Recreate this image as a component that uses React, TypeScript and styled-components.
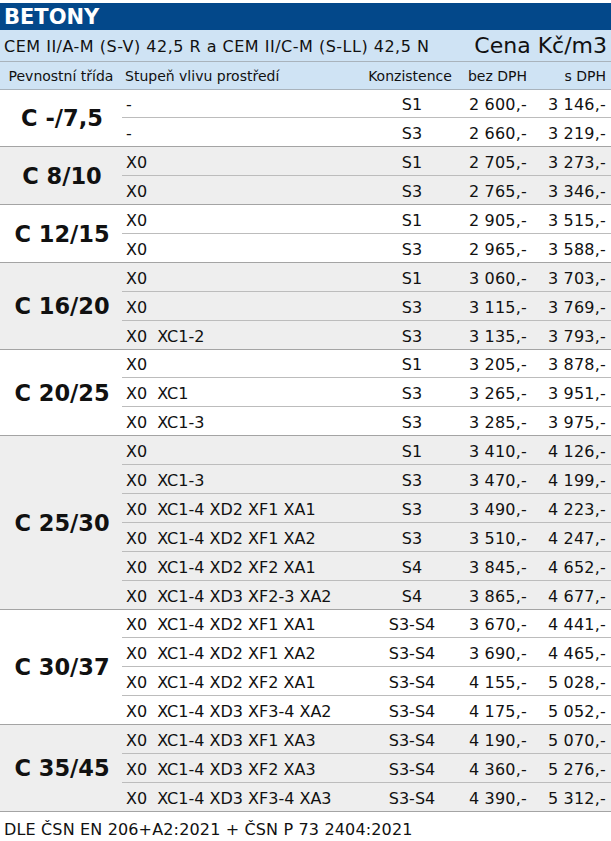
import React from "react";
import styled, { createGlobalStyle } from "styled-components";

const Global = createGlobalStyle`
  html, body { margin: 0; padding: 0; background: #ffffff; }
  body { font-family: "DejaVu Sans", Verdana, sans-serif; color: #111; }
`;

const Page = styled.div`
  width: 611px;
  padding-top: 3px;
`;

const TitleBar = styled.div`
  height: 27px;
  background: #03488a;
  color: #ffffff;
  font-weight: bold;
  font-size: 21px;
  line-height: 28px;
  padding-left: 4px;
`;

const Table = styled.table`
  width: 611px;
  border-collapse: collapse;
  table-layout: fixed;
  font-size: 16px;
`;

const CementRow = styled.tr`
  background: #cfe3f4;
  height: 31px;
  border-bottom: 1px solid #a9b3bc;
`;

const CementCell = styled.td`
  padding: 2px 0 0 4px;
  font-size: 16px;
  letter-spacing: 0.5px;
  white-space: nowrap;
`;

const PriceTitle = styled.td`
  font-size: 22px;
  text-align: right;
  padding: 0 4px 0 0;
  white-space: nowrap;
`;

const HeadRow = styled.tr`
  background: #cfe3f4;
  height: 28px;
  border-bottom: 1px solid #a9b3bc;
`;

const HeadCell = styled.th<{ $align?: string; $pr?: number }>`
  font-weight: normal;
  font-size: 14px;
  text-align: ${(p) => p.$align || "left"};
  padding: 1px ${(p) => p.$pr ?? 0}px 0 ${(p) => (p.$align === "left" ? 3 : 0)}px;
  white-space: nowrap;
`;

const BodyRow = styled.tr<{ $shade: boolean; $last: boolean }>`
  background: ${(p) => (p.$shade ? "#eeeeee" : "#ffffff")};
  height: 28.9px;
  border-bottom: 1px solid ${(p) => (p.$last ? "#a4a4a4" : "#bcbcbc")};
`;

const ClassCell = styled.td`
  font-weight: bold;
  font-size: 22.5px;
  text-align: center;
  vertical-align: middle;
  white-space: nowrap;
  padding: 1px 0 0 2px;
  border-bottom: 1px solid #a4a4a4;
`;

const TextCell = styled.td`
  padding: 3px 0 0 4px;
  white-space: pre;
`;

const ConsCell = styled.td`
  padding: 3px 0 0 4px;
  text-align: center;
  white-space: nowrap;
`;

const NumCell = styled.td<{ $pr: number }>`
  padding: 3px ${(p) => p.$pr}px 0 0;
  text-align: right;
  white-space: nowrap;
  letter-spacing: 0.2px;
`;

const Footer = styled.div`
  font-size: 16px;
  letter-spacing: 0.15px;
  padding: 8px 0 0 4px;
`;

type Row = [string, string, string, string];
type Group = { name: string; rows: Row[] };

const groups: Group[] = [
  { name: "C -/7,5", rows: [["-", "S1", "2 600,-", "3 146,-"], ["-", "S3", "2 660,-", "3 219,-"]] },
  { name: "C 8/10", rows: [["X0", "S1", "2 705,-", "3 273,-"], ["X0", "S3", "2 765,-", "3 346,-"]] },
  { name: "C 12/15", rows: [["X0", "S1", "2 905,-", "3 515,-"], ["X0", "S3", "2 965,-", "3 588,-"]] },
  {
    name: "C 16/20",
    rows: [
      ["X0", "S1", "3 060,-", "3 703,-"],
      ["X0", "S3", "3 115,-", "3 769,-"],
      ["X0  XC1-2", "S3", "3 135,-", "3 793,-"],
    ],
  },
  {
    name: "C 20/25",
    rows: [
      ["X0", "S1", "3 205,-", "3 878,-"],
      ["X0  XC1", "S3", "3 265,-", "3 951,-"],
      ["X0  XC1-3", "S3", "3 285,-", "3 975,-"],
    ],
  },
  {
    name: "C 25/30",
    rows: [
      ["X0", "S1", "3 410,-", "4 126,-"],
      ["X0  XC1-3", "S3", "3 470,-", "4 199,-"],
      ["X0  XC1-4 XD2 XF1 XA1", "S3", "3 490,-", "4 223,-"],
      ["X0  XC1-4 XD2 XF1 XA2", "S3", "3 510,-", "4 247,-"],
      ["X0  XC1-4 XD2 XF2 XA1", "S4", "3 845,-", "4 652,-"],
      ["X0  XC1-4 XD3 XF2-3 XA2", "S4", "3 865,-", "4 677,-"],
    ],
  },
  {
    name: "C 30/37",
    rows: [
      ["X0  XC1-4 XD2 XF1 XA1", "S3-S4", "3 670,-", "4 441,-"],
      ["X0  XC1-4 XD2 XF1 XA2", "S3-S4", "3 690,-", "4 465,-"],
      ["X0  XC1-4 XD2 XF2 XA1", "S3-S4", "4 155,-", "5 028,-"],
      ["X0  XC1-4 XD3 XF3-4 XA2", "S3-S4", "4 175,-", "5 052,-"],
    ],
  },
  {
    name: "C 35/45",
    rows: [
      ["X0  XC1-4 XD3 XF1 XA3", "S3-S4", "4 190,-", "5 070,-"],
      ["X0  XC1-4 XD3 XF2 XA3", "S3-S4", "4 360,-", "5 276,-"],
      ["X0  XC1-4 XD3 XF3-4 XA3", "S3-S4", "4 390,-", "5 312,-"],
    ],
  },
];

export default function App() {
  return (
    <Page>
      <Global />
      <TitleBar>BETONY</TitleBar>
      <Table>
        <colgroup>
          <col style={{ width: 122 }} />
          <col style={{ width: 243 }} />
          <col style={{ width: 90 }} />
          <col style={{ width: 75 }} />
          <col style={{ width: 81 }} />
        </colgroup>
        <thead>
          <CementRow>
            <CementCell colSpan={3}>CEM II/A-M (S-V) 42,5 R a CEM II/C-M (S-LL) 42,5 N</CementCell>
            <PriceTitle colSpan={2}>Cena Kč/m3</PriceTitle>
          </CementRow>
          <HeadRow>
            <HeadCell $align="center">Pevnostní třída</HeadCell>
            <HeadCell $align="left">Stupeň vlivu prostředí</HeadCell>
            <HeadCell $align="center">Konzistence</HeadCell>
            <HeadCell $align="right" $pr={3}>bez DPH</HeadCell>
            <HeadCell $align="right" $pr={5}>s DPH</HeadCell>
          </HeadRow>
        </thead>
        <tbody>
          {groups.map((g, gi) =>
            g.rows.map((r, ri) => (
              <BodyRow key={`${gi}-${ri}`} $shade={gi % 2 === 1} $last={ri === g.rows.length - 1}>
                {ri === 0 && <ClassCell rowSpan={g.rows.length}>{g.name}</ClassCell>}
                <TextCell>{r[0]}</TextCell>
                <ConsCell>{r[1]}</ConsCell>
                <NumCell $pr={3}>{r[2]}</NumCell>
                <NumCell $pr={5}>{r[3]}</NumCell>
              </BodyRow>
            ))
          )}
        </tbody>
      </Table>
      <Footer>DLE ČSN EN 206+A2:2021 + ČSN P 73 2404:2021</Footer>
    </Page>
  );
}
